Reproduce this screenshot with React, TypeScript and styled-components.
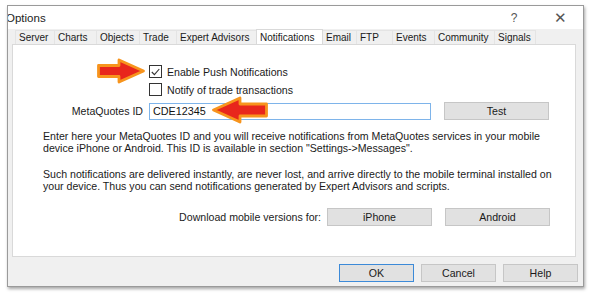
import React from "react";
import styled, { createGlobalStyle } from "styled-components";

const GlobalStyle = createGlobalStyle`
  html, body {
    margin: 0;
    padding: 0;
    background: #ffffff;
  }
  body {
    font-family: "Liberation Sans", Arial, sans-serif;
    font-size: 10px;
    color: #222;
  }
`;

const Page = styled.div`
  width: 593px;
  height: 297px;
  padding: 5px 0 0 7px;
  box-sizing: border-box;
  position: relative;
  overflow: hidden;
`;

const Window = styled.div`
  width: 577px;
  height: 282px;
  box-sizing: border-box;
  border: 1px solid #9a9a9a;
  background: #f0f0f0;
  box-shadow: 1px 2px 3px rgba(0, 0, 0, 0.35);
  display: flex;
  flex-direction: column;
`;

const TitleBar = styled.div`
  height: 23px;
  background: #ffffff;
  display: flex;
  align-items: center;
  overflow: hidden;
  font-size: 11.5px;
  color: #222;
`;

const Title = styled.span`
  margin-left: -2px;
  flex: 1;
`;

const TitleIcon = styled.span<{ size: number }>`
  width: 46px;
  text-align: center;
  font-size: ${(p) => p.size}px;
  color: #555;
`;

const TabStrip = styled.div`
  display: flex;
  height: 15px;
  margin: 0 0 0 7px;
  align-items: flex-end;
`;

const Tab = styled.div<{ active?: boolean; w: number }>`
  width: ${(p) => p.w}px;
  height: ${(p) => (p.active ? 15 : 14)}px;
  box-sizing: border-box;
  background: ${(p) => (p.active ? "#ffffff" : "#f0f0f0")};
  border: 1px solid ${(p) => (p.active ? "#d9d9d9" : "#e4e4e4")};
  border-bottom: none;
  margin-right: -1px;
  display: flex;
  align-items: center;
  padding-left: 3px;
  white-space: nowrap;
  color: #1a1a1a;
  position: relative;
  z-index: ${(p) => (p.active ? 1 : 0)};
`;

const Panel = styled.div`
  margin: 0 7px 0 4px;
  height: 213px;
  background: #ffffff;
  border: 1px solid #d9d9d9;
  box-sizing: border-box;
  display: flex;
  flex-direction: column;
  padding: 20px 0 0 0;
  font-size: 10.6px;
`;

const CheckRow = styled.label`
  display: flex;
  align-items: center;
  gap: 5px;
  margin-left: 136px;
  height: 13px;
  margin-bottom: 5px;
  color: #1a1a1a;
`;

const Box = styled.span`
  width: 11px;
  height: 11px;
  border: 1px solid #333;
  background: #fff;
  display: flex;
  align-items: center;
  justify-content: center;
`;

const IdRow = styled.div`
  display: flex;
  align-items: center;
  margin-top: 1px;
  height: 18px;
`;

const FieldLabel = styled.span`
  width: 130px;
  text-align: right;
  margin-right: 6px;
  color: #1a1a1a;
`;

const Input = styled.div`
  width: 282px;
  height: 17px;
  box-sizing: border-box;
  border: 1px solid #7eb4ea;
  display: flex;
  align-items: center;
  padding-left: 3px;
  color: #111;
  font-size: 10.8px;
`;

const Button = styled.div<{ w: number; focus?: boolean }>`
  width: ${(p) => p.w}px;
  height: 18px;
  box-sizing: border-box;
  background: #e1e1e1;
  border: 1px solid ${(p) => (p.focus ? "#3c8ad8" : "#c6c6c6")};
  display: flex;
  align-items: center;
  justify-content: center;
  color: #1a1a1a;
  font-size: 10.6px;
`;

const Para = styled.p<{ gapTop: number }>`
  margin: ${(p) => p.gapTop}px 0 0 30px;
  line-height: 12px;
  white-space: nowrap;
  color: #1a1a1a;
`;

const DownloadRow = styled.div`
  display: flex;
  align-items: center;
  margin-top: 15px;
  height: 19px;
`;

const DownloadLabel = styled.span`
  width: 308px;
  text-align: right;
  margin-right: 6px;
`;

const Spacer = styled.div`
  width: 13px;
`;

const Footer = styled.div`
  flex: 1;
  display: flex;
  justify-content: flex-end;
  align-items: flex-start;
  gap: 7px;
  padding: 7px 5px 0 0;
`;

const Arrow = styled.svg`
  position: absolute;
  overflow: visible;
`;

const Check = () => (
  <svg width="9" height="8" viewBox="0 0 9 8">
    <path d="M0.8 4 L3.4 6.6 L8.3 1" fill="none" stroke="#333" strokeWidth="1.1" />
  </svg>
);

const RightArrow = ({ x, y }: { x: number; y: number }) => (
  <Arrow style={{ left: x, top: y }} width="48" height="24" viewBox="0 0 48 24">
    <path
      d="M1.5 6.5 L22 6.5 L22 1 L46.5 12 L22 23 L22 17.5 L1.5 17.5 Z"
      fill="#e8261c"
      stroke="#f7941d"
      strokeWidth="2.8"
      strokeLinejoin="round"
    />
  </Arrow>
);

const LeftArrow = ({ x, y }: { x: number; y: number }) => (
  <Arrow style={{ left: x, top: y }} width="56" height="26" viewBox="0 0 56 26">
    <path
      d="M54.5 7 L28 7 L28 1 L1.5 13 L28 25 L28 19 L54.5 19 Z"
      fill="#e8261c"
      stroke="#f7941d"
      strokeWidth="2.8"
      strokeLinejoin="round"
    />
  </Arrow>
);

const tabs: [string, number][] = [
  ["Server", 40],
  ["Charts", 43],
  ["Objects", 44],
  ["Trade", 38],
  ["Expert Advisors", 81],
  ["Notifications", 67],
  ["Email", 35],
  ["FTP", 37],
  ["Events", 43],
  ["Community", 61],
  ["Signals", 42],
];

export default function App() {
  return (
    <>
      <GlobalStyle />
      <Page>
        <Window>
          <TitleBar>
            <Title>Options</Title>
            <TitleIcon size={12}>?</TitleIcon>
            <TitleIcon size={15}>✕</TitleIcon>
          </TitleBar>
          <TabStrip>
            {tabs.map(([t, w]) => (
              <Tab key={t} w={w} active={t === "Notifications"}>
                {t}
              </Tab>
            ))}
          </TabStrip>
          <Panel>
            <CheckRow>
              <Box>
                <Check />
              </Box>
              Enable Push Notifications
            </CheckRow>
            <CheckRow>
              <Box />
              Notify of trade transactions
            </CheckRow>
            <IdRow>
              <FieldLabel>MetaQuotes ID</FieldLabel>
              <Input>CDE12345</Input>
              <Spacer />
              <Button w={105}>Test</Button>
            </IdRow>
            <Para gapTop={10}>
              Enter here your MetaQuotes ID and you will receive notifications from MetaQuotes services in your mobile
              <br />
              device iPhone or Android. This ID is available in section "Settings-&gt;Messages".
            </Para>
            <Para gapTop={14}>
              Such notifications are delivered instantly, are never lost, and arrive directly to the mobile terminal installed on
              <br />
              your device. Thus you can send notifications generated by Expert Advisors and scripts.
            </Para>
            <DownloadRow>
              <DownloadLabel>Download mobile versions for:</DownloadLabel>
              <Button w={105}>iPhone</Button>
              <Spacer />
              <Button w={105}>Android</Button>
            </DownloadRow>
          </Panel>
          <Footer>
            <Button w={75} focus>
              OK
            </Button>
            <Button w={75}>Cancel</Button>
            <Button w={75}>Help</Button>
          </Footer>
        </Window>
        <RightArrow x={97} y={59} />
        <LeftArrow x={212} y={97} />
      </Page>
    </>
  );
}
